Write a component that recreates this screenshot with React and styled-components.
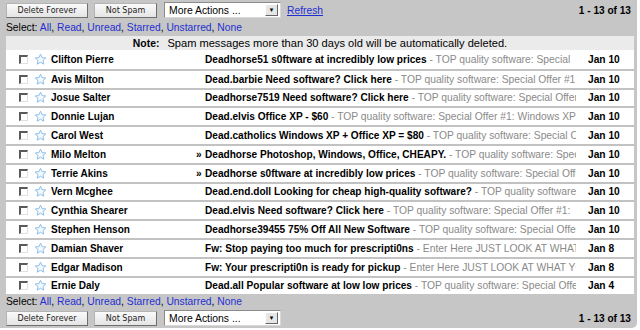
import React from 'react';
import styled, { createGlobalStyle } from 'styled-components';

const GlobalStyle = createGlobalStyle`
  html, body {
    margin: 0;
    padding: 0;
    background: #fff;
  }
  body {
    font-family: "Liberation Sans", Arial, sans-serif;
    font-size: 10.3px;
    color: #000;
  }
  b {
    font-size: 10.1px;
  }
`;

const Panel = styled.div`
  width: 637px;
  height: 328px;
  box-sizing: border-box;
  background: #c6c6c6;
  border-bottom-right-radius: 5px;
  padding: 2px 3px 0 6px;
`;

const Toolbar = styled.div`
  display: flex;
  align-items: center;
  height: 16px;
  margin-top: ${p => p.top || 0}px;
`;

const Button = styled.button`
  flex-shrink: 0;
  height: 15px;
  padding: 0;
  width: ${p => p.w}px;
  margin-right: 6px;
  font-family: "DejaVu Sans", Verdana, sans-serif;
  font-size: 8px;
  color: #222;
  background: linear-gradient(#fafafa, #e4e4e4);
  border: 1px solid #b4b4b4;
  border-right-color: #6e6e6e;
  border-bottom-color: #6e6e6e;
  border-radius: 0;
`;

const Select = styled.div`
  flex-shrink: 0;
  display: flex;
  align-items: center;
  justify-content: space-between;
  box-sizing: border-box;
  width: 117px;
  height: 16px;
  margin-left: 1px;
  padding: 0 2px 0 4px;
  background: #fff;
  border: 1px solid #8c8c8c;
  border-right-color: #d8d8d8;
  border-bottom-color: #d8d8d8;
  font-size: 10.4px;
`;

const Arrow = styled.span`
  display: flex;
  align-items: center;
  justify-content: center;
  width: 11px;
  height: 10px;
  background: #e6e6e6;
  border: 1px solid #fff;
  border-right-color: #666;
  border-bottom-color: #666;
  font-size: 6px;
  color: #000;
`;

const Refresh = styled.a`
  margin-left: 6px;
  color: #1f2fd0;
  text-decoration: underline;
`;

const Counter = styled.b`
  margin-left: auto;
  margin-right: 3px;
`;

const SelectLine = styled.div`
  height: 13px;
  line-height: 13px;
  margin-top: ${p => p.top}px;
  span {
    color: #1f2fd0;
  }
`;

const Note = styled.div`
  height: 14px;
  line-height: 14px;
  margin-top: 2px;
  background: #ebebeb;
  text-align: center;
  font-size: 11.1px;
  b {
    font-size: 10.4px;
    margin-right: 8px;
  }
`;

const List = styled.div`
  background: #fff;
`;

const Row = styled.div`
  display: grid;
  grid-template-columns: 15px 17px 145px 9px minmax(0, 1fr) 58px;
  align-items: center;
  box-sizing: border-box;
  height: 18.8px;
  padding-left: 13px;
  border-top: ${p => (p.first ? 'none' : '2px solid #c2c2c2')};
  white-space: nowrap;
`;

const Check = styled.span`
  display: block;
  box-sizing: border-box;
  width: 9px;
  height: 9px;
  border-top: 2px solid #5a5a5a;
  border-left: 2px solid #5a5a5a;
  border-right: 1px solid #e0e0e0;
  border-bottom: 1px solid #e0e0e0;
`;

const Sender = styled.b`
  overflow: hidden;
  font-size: 10px;
`;

const Subject = styled.div`
  overflow: hidden;
  span {
    color: #8a8a8a;
  }
`;

const DateCell = styled.b`
  padding-left: 12px;
  font-size: 10.2px;
`;

const Star = () => (
  <svg width="13" height="13" viewBox="0 0 24 24">
    <path
      d="M12 2.2l2.9 6.3 6.9.7-5.2 4.6 1.5 6.8L12 17.1l-6.1 3.5 1.5-6.8-5.2-4.6 6.9-.7z"
      fill="#f4f9fe"
      stroke="#8cbce6"
      strokeWidth="1.8"
      strokeLinejoin="round"
    />
  </svg>
);

const mails = [
  ['Clifton Pierre', false, 'Deadhorse51 s0ftware at incredibly low prices', 'TOP quality software: Special', 'Jan 10'],
  ['Avis Milton', false, 'Dead.barbie Need software? Click here', 'TOP quality software: Special Offer #1', 'Jan 10'],
  ['Josue Salter', false, 'Deadhorse7519 Need software? Click here', 'TOP quality software: Special Offer', 'Jan 10'],
  ['Donnie Lujan', false, 'Dead.elvis Office XP - $60', 'TOP quality software: Special Offer #1: Windows XP', 'Jan 10'],
  ['Carol West', false, 'Dead.catholics Windows XP + Office XP = $80', 'TOP quality software: Special Offer', 'Jan 10'],
  ['Milo Melton', true, 'Deadhorse Photoshop, Windows, Office, CHEAPY.', 'TOP quality software: Special', 'Jan 10'],
  ['Terrie Akins', true, 'Deadhorse s0ftware at incredibly low prices', 'TOP quality software: Special Offer', 'Jan 10'],
  ['Vern Mcghee', false, 'Dead.end.doll Looking for cheap high-quality software?', 'TOP quality software:', 'Jan 10'],
  ['Cynthia Shearer', false, 'Dead.elvis Need software? Click here', 'TOP quality software: Special Offer #1:', 'Jan 10'],
  ['Stephen Henson', false, 'Deadhorse39455 75% Off All New Software', 'TOP quality software: Special Offer', 'Jan 10'],
  ['Damian Shaver', false, 'Fw: Stop paying too much for prescripti0ns', 'Enter Here JUST LOOK AT WHAT', 'Jan 8'],
  ['Edgar Madison', false, 'Fw: Your prescripti0n is ready for pickup', 'Enter Here JUST LOOK AT WHAT YOU', 'Jan 8'],
  ['Ernie Daly', false, 'Dead.all Popular software at low low prices', 'TOP quality software: Special Offer', 'Jan 4'],
];

const Actions = ({ top, refresh }) => (
  <Toolbar top={top}>
    <Button w={82}>Delete Forever</Button>
    <Button w={63}>Not Spam</Button>
    <Select>
      More Actions ...
      <Arrow>▼</Arrow>
    </Select>
    {refresh && <Refresh href="#">Refresh</Refresh>}
    <Counter>1 - 13 of 13</Counter>
  </Toolbar>
);

const Selector = ({ top }) => (
  <SelectLine top={top}>
    Select: <span>All</span>, <span>Read</span>, <span>Unread</span>, <span>Starred</span>,{' '}
    <span>Unstarred</span>, <span>None</span>
  </SelectLine>
);

export default function App() {
  return (
    <>
      <GlobalStyle />
      <Panel>
        <Actions top={0} refresh />
        <Selector top={3} />
        <Note>
          <b>Note:</b>Spam messages more than 30 days old will be automatically deleted.
        </Note>
        <List>
          {mails.map(([name, thread, subject, snippet, date], i) => (
            <Row key={name} first={i === 0}>
              <Check />
              <Star />
              <Sender>{name}</Sender>
              <b>{thread ? '»' : ''}</b>
              <Subject>
                <b>{subject}</b>
                <span> - {snippet}</span>
              </Subject>
              <DateCell>{date}</DateCell>
            </Row>
          ))}
        </List>
        <Selector top={1} />
        <Actions top={2} />
      </Panel>
    </>
  );
}
